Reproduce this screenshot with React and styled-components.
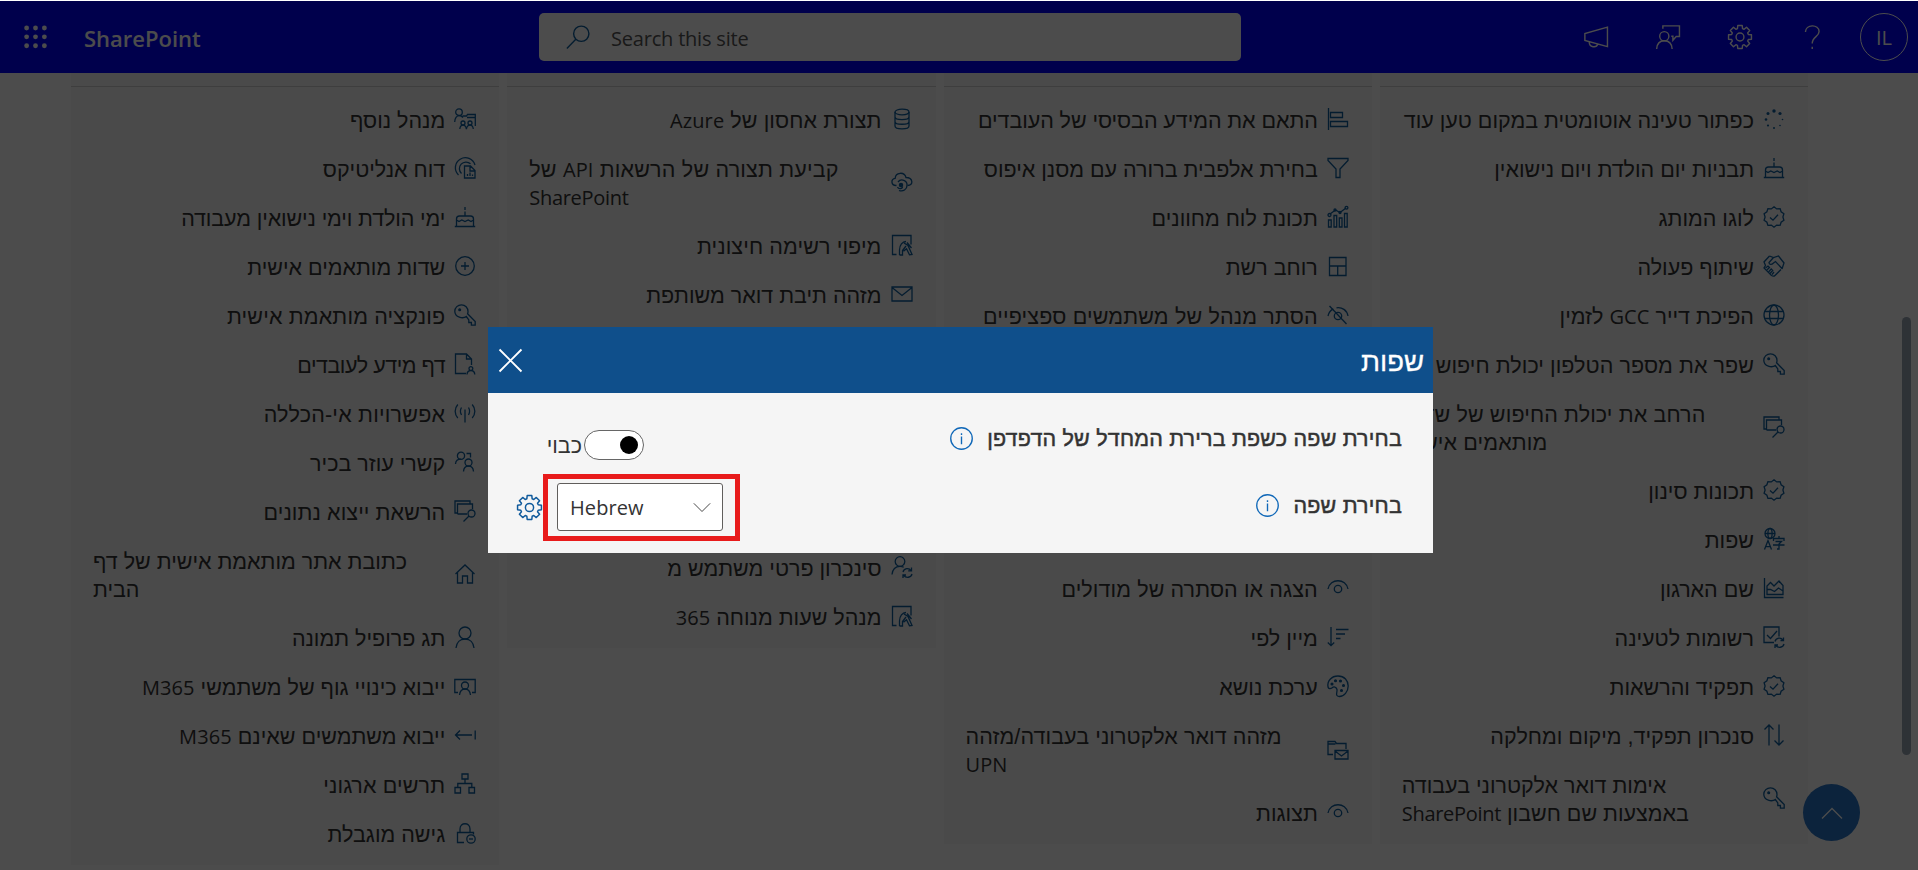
import React from 'react';
import styled, { createGlobalStyle } from 'styled-components';

const GlobalStyle = createGlobalStyle`
  * { box-sizing: border-box; }
  html, body { margin: 0; padding: 0; height: 100%; overflow: hidden; background: #fff; }
  body { font-family: 'Open Sans', 'Noto Sans', 'Liberation Sans', sans-serif; color: #333; }
`;

const Page = styled.div`
  height: 870px;
  padding-top: 1px;
  display: flex;
  flex-direction: column;
  overflow: hidden;
  position: relative;
`;

const SuiteBar = styled.header`
  flex: none;
  height: 72px;
  background: #0000ff;
  color: #fff;
  display: flex;
  align-items: center;
  padding: 0 10px 0 24px;
`;

const Brand = styled.div`
  width: 455px;
  margin-left: 37px;
  padding-top: 2px;
  font-size: 22px;
  font-weight: 600;
`;

const SearchBox = styled.div`
  width: 702px;
  height: 48px;
  border-radius: 5px;
  background: #fff;
  display: flex;
  align-items: center;
  padding-left: 27px;
  gap: 21px;
  color: #555;
  font-size: 20px;
  letter-spacing: -0.2px;
  svg { color: #0f5f9f; }
`;

const SearchHint = styled.span`
  padding-top: 2px;
`;

const BarActions = styled.div`
  margin-left: auto;
  display: flex;
  align-items: center;
  gap: 48px;
`;

const Avatar = styled.div`
  width: 48px;
  height: 48px;
  border: 1px solid #fff;
  border-radius: 50%;
  display: flex;
  align-items: center;
  justify-content: center;
  font-size: 20px;
  padding-top: 1px;
  margin-left: -12px;
`;

const Columns = styled.main`
  flex: 1;
  min-height: 0;
  direction: ltr;
  display: flex;
  align-items: flex-start;
  gap: 8px;
  padding-left: 71px;
  overflow: hidden;
`;

const Column = styled.section`
  flex: none;
  width: 428.25px;
  background: #f7f7f7;
  padding-bottom: 6px;
`;

const ColumnTop = styled.div`
  height: 14px;
  border-bottom: 1px solid #cfcfcf;
  margin-bottom: 9px;
`;

const Item = styled.div`
  direction: rtl;
  display: flex;
  align-items: center;
  gap: 9px;
  padding: 10.5px 23px 10.5px 22px;
  font-family: 'Liberation Sans', sans-serif;
  font-size: 21.5px;
  line-height: 28px;
  text-align: left;
  white-space: nowrap;
  svg { flex: none; color: #0f5f9f; margin-bottom: 4px; }
`;

const ItemText = styled.div`
  flex: ${(p) => (p.$wide ? '1' : 'none')};
  letter-spacing: ${(p) => p.$track}px;
`;

const Latin = styled.span`
  font-family: 'Open Sans', sans-serif;
  font-size: 20px;
  line-height: 20px;
  letter-spacing: ${(p) => (p.$long ? -0.3 : 0.1)}px;
`;

const Gap = styled.div`
  height: 224px;
`;

const ScrollThumb = styled.div`
  position: absolute;
  left: 1902px;
  top: 317px;
  width: 9px;
  height: 438px;
  border-radius: 5px;
  background: #99a7b4;
`;

const ToTop = styled.button`
  position: absolute;
  left: 1803px;
  top: 784px;
  width: 57px;
  height: 57px;
  border: 0;
  border-radius: 50%;
  background: #2875c8;
  color: #fff;
  display: flex;
  align-items: center;
  justify-content: center;
`;

const Overlay = styled.div`
  position: fixed;
  inset: 1px 0 0 0;
  background: rgba(0, 0, 0, 0.7);
  padding: 326px 0 0 488px;
`;

const Dialog = styled.div`
  width: 945px;
  height: 226px;
  background: #f5f5f5;
  direction: rtl;
  font-family: 'Liberation Sans', sans-serif;
`;

const DialogHead = styled.div`
  height: 66px;
  background: #0f4f8b;
  color: #fff;
  display: flex;
  align-items: center;
  justify-content: space-between;
  padding: 0 9px 0 11px;
  font-size: 27.5px;
`;

const DialogTitle = styled.span`
  padding-top: 3px;
  -webkit-text-stroke: 0.3px currentColor;
`;

const DialogBody = styled.div`
  padding: 11px 31px 0 29px;
  display: flex;
  flex-direction: column;
  gap: 1px;
`;

const Field = styled.div`
  height: 68px;
  display: flex;
  align-items: center;
  justify-content: space-between;
  font-size: 21.5px;
`;

const Label = styled.div`
  display: flex;
  align-items: center;
  gap: 14px;
  letter-spacing: 0.2px;
  padding-bottom: ${(p) => p.$lift || 0}px;
  svg { color: #1068b8; }
`;

const LabelText = styled.span`
  padding-top: 2px;
  -webkit-text-stroke: 0.5px currentColor;
`;

const Control = styled.div`
  direction: ltr;
  display: flex;
  align-items: center;
  gap: ${(p) => p.$gap}px;
  padding: ${(p) => p.$pad};
  > svg { color: #0f5a9c; }
`;

const Toggle = styled.div`
  width: 60px;
  height: 30px;
  border: 1px solid #666;
  border-radius: 15px;
  background: #fff;
  display: flex;
  align-items: center;
  justify-content: flex-end;
  padding-right: 5px;
`;

const ToggleText = styled.span`
  display: flex;
  justify-content: flex-end;
  width: 32px;
  margin-right: 1px;
  padding-top: 2px;
`;

const Knob = styled.span`
  width: 18px;
  height: 18px;
  border-radius: 50%;
  background: #000;
`;

const Select = styled.div`
  position: relative;
  width: 166px;
  height: 48px;
  border: 1px solid #605e5c;
  border-radius: 3px;
  background: #fff;
  display: flex;
  align-items: center;
  justify-content: space-between;
  padding: 2px 11px 0 12px;
  > svg { margin-bottom: 3px; }
`;

const Highlight = styled.span`
  position: absolute;
  inset: -10px -18px -11px -15px;
  border: 5px solid #e81b1b;
`;

const gearPath = Array.from({ length: 8 }, (_, k) =>
  [[-17, 8], [-11, 10.7], [11, 10.7], [17, 8]].map(([d, r]) => {
    const a = ((k * 45 + d) * Math.PI) / 180;
    return `${(11 + r * Math.sin(a)).toFixed(2)} ${(11 - r * Math.cos(a)).toFixed(2)}`;
  }).join('L')
).join('L');

const icons = {
  managers: <><circle cx="5" cy="4.2" r="3.3" /><path d="M.7 14c0-4 2-6.4 4.6-6.4 1.600 0 2.800.7 3.600 2M8.500 8V8h4l1-1.500h7.800V18M13 9.500h8" /><circle cx="9" cy="15" r="2" /><circle cx="16" cy="15" r="2" /><path d="M5.800 21c.3-2.500 1.600-3.800 3.200-3.800s2.900 1.300 3.400 3.800c.5-2.500 1.900-3.800 3.600-3.800s3 1.300 3.300 3.800" /></>,
  report: <><path d="M4.500 18A10 10 0 1 1 21 8M7.500 16.500A6.500 6.500 0 1 1 16.500 6.800" /><path d="M10.500 21V9h6l4.500 4.500V21zM16 9v5h5M13.500 19v-2M16 19v-3.500M18.500 19v-1.500" /></>,
  cake: <path d="M11 1v3M11 5.500v4M2.500 20v-7c0-2 1-3 3-3h11c2 0 3 1 3 3v7M.8 20.500h20.400M2.500 14l2.500 1.500 2.800-1.500 3.200 1.500 3.200-1.500 2.800 1.500 2.500-1.500" />,
  plus: <><circle cx="11" cy="11" r="9.300" /><path d="M11 7v8M7 11h8" /></>,
  key: <><path d="M12.300 12.500C9 15 .8 13.500.8 7.300.8 3.500 3.800.8 7.500.8s6.500 3 6.500 6.700c0 1-.2 1.700-.4 2.300l7.600 7.700v3.700h-3.800v-2.700h-2.600v-2.600l-2.500-3.400z" /><circle cx="5.700" cy="5.700" r=".9" fill="currentColor" /></>,
  page: <path d="M12 20.500H1.500V1h11l5 5v6M12.500 1v5h5M15 15.500a1.900 1.900 0 1 0 3.800 0 1.900 1.900 0 1 0-3.800 0M13 21.500c.2-2.500 1.700-4 3.900-4s3.700 1.500 3.900 4" />,
  antenna: <path d="M11 7.500v13M7.500 5.500c-1.500 2.500-1.500 5 0 7.500M14.500 5.500c1.500 2.500 1.500 5 0 7.500M3.800 2.500c-3.500 4-3.500 9.500 0 13.500M18.200 2.500c3.500 4 3.500 9.500 0 13.500" />,
  assistant: <><circle cx="7" cy="4.800" r="3.600" /><path d="M1.500 13c.2-3 2.200-4.800 5.500-4.800M12.500 2.500h4v4" /><circle cx="14.500" cy="11.500" r="3.500" /><path d="M9.500 20.500c.2-3.500 2-5.300 5-5.300s4.800 1.800 5 5.300" /></>,
  search2: <><path d="M3.500 13H1V1h15v3M3.500 14V4H18.500v5M3.500 14h9.500" /><circle cx="17.500" cy="13.500" r="3.500" /><path d="M15 16l-5.500 5.500" /></>,
  home: <path d="M1.500 11L11 2l9.500 9M3.500 9.500V20h5v-7h5v7h5V9.500" />,
  person: <><circle cx="11" cy="7" r="6" /><path d="M2 22c.5-5.500 4-9 9-9s8.500 3.500 9 9" /></>,
  profile: <><path d="M4 17.500H.8V4.500h20.400v13H18" /><circle cx="11" cy="10.500" r="3.500" /><path d="M5.500 20c.5-4 2.500-6 5.500-6s5 2 5.500 6" /></>,
  arrowIn: <path d="M1.500 11H18M6 6.500L1.500 11 6 15.500M21.200 6.500v9" />,
  org: <path d="M8 1h6v5H8zM1 14.500h5.500V20H1zM15 14.500h5.500V20H15zM11 6v4.500M3.800 14.500v-4h14v4" />,
  lock: <><path d="M10 20.500H3.500V10.500h16v2M6 10.500V7c0-7 10-7 10 0v3.500" /><circle cx="17" cy="17" r="4.200" /><path d="M15 17h4" /></>,
  database: <><ellipse cx="11" cy="4" rx="7" ry="2.800" /><path d="M4 4v14c0 3.800 14 3.800 14 0V4M4 8.700c0 3.800 14 3.800 14 0M4 13.400c0 3.800 14 3.800 14 0" /></>,
  cloud: <><path d="M5.500 14.500H5c-5 0-5.500-6.500-.8-7.200C4.500 1 13.500.5 15 6.500c7 0 8 8 1.500 8" /><path d="M7 11a5 5 0 0 1 9 3.500c0 4-4 6.500-8 5M6.500 16c1 2.500 5 2 5-.5" /><circle cx="10" cy="14" r="1.600" fill="currentColor" /></>,
  listmap: <path d="M5.500 20.500H1.500V1.500h18.500v9M8.500 21v-5c0-5 3-8.500 6.500-8.500M8.500 21h3v-4.500l3.500-4.500M13 9l4 2.500 4 9-2.500.3-3-6-3 2.500M16 8.500l4.500 5.500" />,
  mail: <path d="M1 4h20v14H1zM1 4.500l10 8 10-8" />,
  usersync: <><circle cx="9" cy="5.500" r="4.800" /><path d="M1 18.500c.5-5 3.500-8.200 8-8.200 1.500 0 2.700.4 3.700 1M12 16c1-4 6-4.500 8-1.500M20.500 11.500v3.300h-3.300M21 18c-1 4-6 4.200-8.200 1.500M12 22v-3h3" /></>,
  barlist: <path d="M1.500 0v22M3.500 4.500h12v5h-12zM3.500 13.500h17v5h-17z" />,
  filter: <path d="M1 1.500h20v2l-8 8.500v8.500H9V12L1 3.500z" />,
  chart: <><path d="M1.500 14h2.700v7H1.500zM7 9.500h2.700V21H7zM12.300 12H15v9h-2.700zM17.500 7.500h2.700V21h-2.700z" /><path d="M3 8l5.500-4L13 6.500l6-4.500" /><circle cx="2.500" cy="9" r="1.500" /><circle cx="19.500" cy="1.800" r="1.400" /><circle cx="8" cy="4" r="1" /><circle cx="13" cy="6.500" r="1" /></>,
  grid: <path d="M2.500 2.500h16.500v18H2.500zM2.500 11h16.500M10.700 11v9.500" />,
  eye: <><path d="M1 12c2-11 18-11 20 0" /><circle cx="11" cy="12" r="3.700" /></>,
  eyeOff: <><path d="M1 12c.7-3.500 2.800-6 5.300-7.200M9.500 3.800C15 3 20 6 21 12" /><circle cx="11" cy="12" r="3.700" /><path d="M2.500 2l17 18" /></>,
  sort: <path d="M4 1v18.500M.8 16.500L4 19.700l3.200-3.200M9 3.500h12.500M9 8h9M9 12.500h4.500" />,
  palette: <><path d="M1 12C0 6 4.500 1 11 1s10.200 4.500 10.200 10S17 21.500 12.500 21.500c-5 0-2-4.500-2.500-7-.6-3-3.500-3-4.800-1.800C3.500 14 1.500 14 1 12z" /><g fill="currentColor"><circle cx="5" cy="9" r=".9" /><circle cx="8.500" cy="5.800" r=".9" /><circle cx="13.500" cy="6" r=".9" /><circle cx="16.500" cy="10.500" r=".9" /><circle cx="14.500" cy="15.500" r=".9" /></g></>,
  foldermail: <path d="M6 16.500H1V3.500h7l1.500 2H19V11M1 6h7.500M8 12.500h13v8.500H8zM8 13l6.500 5 6.500-5" />,
  spinner: <g fill="currentColor" stroke="none"><circle cx="11" cy="3" r="1.700" /><circle cx="17" cy="5.500" r="1.600" /><circle cx="19.500" cy="11.500" r=".8" /><circle cx="17" cy="17.500" r=".8" /><circle cx="11" cy="20" r="1" /><circle cx="5" cy="17.500" r="1.100" /><circle cx="3" cy="11.500" r="1.300" /><circle cx="5" cy="5.500" r="1.500" /></g>,
  badge: <><path d="M11 .8l2.700 2.100 3.400-.3 1 3.200 2.800 1.900-1 3.300 1 3.300-2.800 1.900-1 3.200-3.400-.3L11 21.200l-2.700-2.100-3.400.3-1-3.200L1.100 14.300l1-3.300-1-3.300 2.800-1.900 1-3.200 3.400.3z" /><path d="M7 11.500l3 2.700 5-5.500" /></>,
  handshake: <><path d="M6.500 1L1 7l1.500 3.500L1 13l7.500 7.500c1.500 1 3 .5 3.500 0l6-6M6.500 1l4 1.500L15.500 1 21 8l-2 6M10.500 2.500L6 7.500c0 2.500 2.500 2.500 4.500.5l2-1.500 6.500 7" /><path d="M2.500 13l2.500-2 1.500 1.500L3.800 15M5.500 17l2.700-3 1.500 1.500-2.700 3M9 19.500l2-2.500" /></>,
  globe: <><circle cx="11" cy="11" r="10" /><ellipse cx="11" cy="11" rx="4.500" ry="10" /><path d="M1.800 7.500h18.400M1.800 14.500h18.400" /></>,
  area: <path d="M1.500 1v19.500h19M4 17.500V9l3.500-3.500L11 9l5-5 4 4.500v9zM4 12.500l3.500 0 4 2 4-3.500 4.500 3" />,
  language: <><circle cx="7" cy="5.500" r="5" /><ellipse cx="7" cy="5.500" rx="2.100" ry="5" /><path d="M2 5.500h10M1.500 21.500L5 12.500l3.500 9M2.700 18.700h4.600M16 8v2.500M10.500 13v-2.500h10.500V13M12.500 13.500h6l-2.500 2.500v5h-2M10 17h11.500" /></>,
  listsync: <><path d="M11 16.500H1V1h15v9.500M4 9l3.500 3.500L14 5M12 15.500c1-4 6-4.500 8-1.500M20.500 11.500v3h-3M21 18c-1 4-6 4.200-8.200 1.500M12 22v-3h3" /></>,
  updown: <path d="M6 21.500V1M1.500 5.500L6 1l4.500 4.500M16 .5V21M11.500 16.500L16 21l4.500-4.500" />,
  gear: <><path d={`M${gearPath}z`} strokeLinejoin="round" /><circle cx="11" cy="11" r="3.600" /></>,
  launcher: <g fill="currentColor" stroke="none">{[2.5, 11, 19.5].map((y) => [2.5, 11, 19.5].map((x) => <circle key={`${x}-${y}`} cx={x} cy={y - 0.6} r="2.300" />))}</g>,
  search: <><circle cx="14" cy="8" r="7" /><path d="M9 13L.8 21.500" /></>,
  megaphone: <path d="M21.500 2v17.800L.8 14.200V7.800zM4.800 15.500c0 5 6.500 6 7.800 2" />,
  feedback: <><circle cx="7.600" cy="10.300" r="4.200" /><path d="M.6 22c.3-4.500 2.800-7.500 7-7.500s6.900 3 7.200 7.500M6.300 3.500V.8h15.200v9.800h-3l-3 3.400v-3.700h-1.500" /></>,
  help: <path d="M5 6.500C5 -1 17.500 -1 17.500 6c0 5-6.300 4.500-6.300 11M11.200 20v2" />,
  close: <path d="M.5.500l21 21M21.500.500l-21 21" />,
  info: <><circle cx="11" cy="11" r="10.300" /><path d="M11 9v7.500M11 6v1.600" /></>,
  up: <path d="M1 16.500l10-10 10 10" />,
  down: <path d="M1 6.500l10 10 10-10" />,
};

const Icon = ({ name, size = 22, stroke = 1.3 }) => (
  <svg width={size} height={size} viewBox="0 0 22 22" fill="none" stroke="currentColor" strokeWidth={stroke} overflow="visible">
    {icons[name]}
  </svg>
);

const Mixed = ({ text }) =>
  text.split(/([A-Za-z0-9]+)/).map((run, i) =>
    i % 2 ? <Latin key={i} $long={run.length > 5}>{run}</Latin> : run
  );

/* icon, first line, second line, letter spacing */
const columns = [
  [
    ['managers', 'מנהל נוסף'],
    ['report', 'דוח אנליטיקס'],
    ['cake', 'ימי הולדת וימי נישואין מעבודה', null, -0.12],
    ['plus', 'שדות מותאמים אישית'],
    ['key', 'פונקציה מותאמת אישית', null, 0.17],
    ['page', 'דף מידע לעובדים', null, -0.48],
    ['antenna', 'אפשרויות אי-הכללה', null, 0.22],
    ['assistant', 'קשרי עוזר בכיר'],
    ['search2', 'הרשאת ייצוא נתונים', null, 0.1],
    ['home', 'כתובת אתר מותאמת אישית של דף', 'הבית'],
    ['person', 'תג פרופיל תמונה'],
    ['profile', 'ייבוא כינויי גוף של משתמשי M365'],
    ['arrowIn', 'ייבוא משתמשים שאינם M365'],
    ['org', 'תרשים ארגוני', null, 0.15],
    ['lock', 'גישה מוגבלת'],
  ],
  [
    ['database', 'תצורת אחסון של Azure', null, 0.1],
    ['cloud', 'קביעת תצורה של הרשאות API של', 'SharePoint', 0.2],
    ['listmap', 'מיפוי רשימה חיצונית', null, 0.12],
    ['mail', 'מזהה תיבת דואר משותפת'],
    null,
    ['usersync', 'סינכרון פרטי משתמש מ'],
    ['listmap', 'מנהל שעות מנוחה 365'],
  ],
  [
    ['barlist', 'התאם את המידע הבסיסי של העובדים', null, -0.07],
    ['filter', 'בחירת אלפבית ברורה עם מסנן איפוס'],
    ['chart', 'תכונת לוח מחוונים'],
    ['grid', 'רוחב רשת'],
    ['eyeOff', 'הסתר מנהל של משתמשים ספציפיים', null, 0.15],
    null,
    ['eye', 'הצגה או הסתרה של מודולים', null, 0.1],
    ['sort', 'מיין לפי'],
    ['palette', 'ערכת נושא'],
    ['foldermail', 'מזהה דואר אלקטרוני בעבודה/מזהה', 'UPN', 0.08],
    ['eye', 'תצוגות'],
  ],
  [
    ['spinner', 'כפתור טעינה אוטומטית במקום טען עוד'],
    ['cake', 'תבניות יום הולדת ויום נישואין'],
    ['badge', 'לוגו המותג'],
    ['handshake', 'שיתוף פעולה'],
    ['globe', 'הפיכת דייר GCC לזמין'],
    ['key', 'שפר את מספר הטלפון יכולת חיפוש', null, 0.07],
    ['search2', 'הרחב את יכולת החיפוש של שדות', 'מותאמים אישית', 0.13],
    ['badge', 'תכונות סינון'],
    ['language', 'שפות'],
    ['area', 'שם הארגון'],
    ['listsync', 'רשומות לטעינה'],
    ['badge', 'תפקיד והרשאות'],
    ['updown', 'סנכרון תפקיד, מיקום ומחלקה'],
    ['key', 'אימות דואר אלקטרוני בעבודה', 'באמצעות שם חשבון SharePoint'],
  ],
];

export default function App() {
  return (
    <Page>
      <GlobalStyle />
      <SuiteBar>
        <Icon name="launcher" size={23} />
        <Brand>SharePoint</Brand>
        <SearchBox>
          <Icon name="search" size={24} />
          <SearchHint>Search this site</SearchHint>
        </SearchBox>
        <BarActions>
          <Icon name="megaphone" size={24} />
          <Icon name="feedback" size={24} />
          <Icon name="gear" size={24} />
          <Icon name="help" size={24} />
          <Avatar>IL</Avatar>
        </BarActions>
      </SuiteBar>
      <Columns>
        {columns.map((items, c) => (
          <Column key={c}>
            <ColumnTop />
            {items.map((item, i) =>
              item ? (
                <Item key={i}>
                  <Icon name={item[0]} />
                  <ItemText $wide={Boolean(item[2])} $track={item[3] || 0}>
                    <Mixed text={item[1]} />
                    {item[2] && <br />}
                    {item[2] && <Mixed text={item[2]} />}
                  </ItemText>
                </Item>
              ) : (
                <Gap key={i} />
              )
            )}
          </Column>
        ))}
      </Columns>
      <ScrollThumb />
      <ToTop><Icon name="up" size={22} /></ToTop>
      <Overlay>
        <Dialog>
          <DialogHead>
            <DialogTitle>שפות</DialogTitle>
            <Icon name="close" size={23} stroke={1.8} />
          </DialogHead>
          <DialogBody>
            <Field>
              <Label>
                <LabelText>בחירת שפה כשפת ברירת המחדל של הדפדפן</LabelText>
                <Icon name="info" size={23} />
              </Label>
              <Control $gap={1} $pad="14px 0 0 33px">
                <ToggleText>כבוי</ToggleText>
                <Toggle><Knob /></Toggle>
              </Control>
            </Field>
            <Field>
              <Label $lift={3}>
                <LabelText>בחירת שפה</LabelText>
                <Icon name="info" size={23} />
              </Label>
              <Control $gap={15} $pad="0">
                <Icon name="gear" size={25} />
                <Select>
                  <Latin>Hebrew</Latin>
                  <Icon name="down" size={18} stroke={1.1} />
                  <Highlight />
                </Select>
              </Control>
            </Field>
          </DialogBody>
        </Dialog>
      </Overlay>
    </Page>
  );
}
